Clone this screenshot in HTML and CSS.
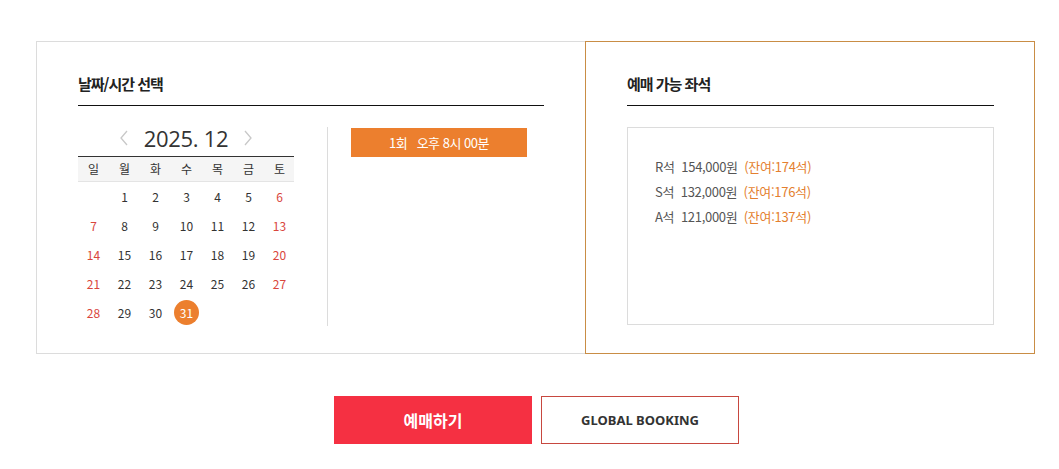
FILE: index.html
```html
<!DOCTYPE html>
<html lang="ko">
<head>
<meta charset="utf-8">
<link rel="stylesheet" href="styles.css">
</head>
<body>
<div class="wrap">
  <section class="panel left">
    <h2 class="title">날짜/시간 선택</h2>
    <div class="left-body">
      <div class="cal">
        <div class="month">
          <span class="arrow"><svg width="10" height="16" viewBox="0 0 10 16"><path d="M8 1 L2 8 L8 15" fill="none" stroke="#c8c8c8" stroke-width="1.3"/></svg></span>
          <span class="month-text">2025. 12</span>
          <span class="arrow"><svg width="10" height="16" viewBox="0 0 10 16"><path d="M2 1 L8 8 L2 15" fill="none" stroke="#c8c8c8" stroke-width="1.3"/></svg></span>
        </div>
        <div class="week">
          <span>일</span><span>월</span><span>화</span><span>수</span><span>목</span><span>금</span><span>토</span>
        </div>
        <div class="days">
          <span></span><span>1</span><span>2</span><span>3</span><span>4</span><span>5</span><span class="we">6</span>
          <span class="we">7</span><span>8</span><span>9</span><span>10</span><span>11</span><span>12</span><span class="we">13</span>
          <span class="we">14</span><span>15</span><span>16</span><span>17</span><span>18</span><span>19</span><span class="we">20</span>
          <span class="we">21</span><span>22</span><span>23</span><span>24</span><span>25</span><span>26</span><span class="we">27</span>
          <span class="we">28</span><span>29</span><span>30</span><span><b class="sel">31</b></span><span></span><span></span><span></span>
        </div>
      </div>
      <div class="times">
        <div class="time-btn">1회&nbsp;&nbsp; 오후 8시 00분</div>
      </div>
    </div>
  </section>
  <section class="panel right">
    <h2 class="title">예매 가능 좌석</h2>
    <div class="seats">
      <p>R석&nbsp; 154,000원 <em>(잔여:174석)</em></p>
      <p>S석&nbsp; 132,000원 <em>(잔여:176석)</em></p>
      <p>A석&nbsp; 121,000원 <em>(잔여:137석)</em></p>
    </div>
  </section>
</div>
<div class="actions">
  <a class="btn btn-book">예매하기</a>
  <a class="btn btn-global">GLOBAL BOOKING</a>
</div>
</body>
</html>
```
FILE: styles.css
```css
* { box-sizing: border-box; }
body {
  margin: 0;
  font-family: "Noto Sans CJK KR", "Noto Sans", sans-serif;
  color: #333;
  background: #fff;
}
.wrap {
  display: flex;
  margin: 41px 0 0 36px;
  width: 999px;
  height: 313px;
}
.panel {
  height: 313px;
  padding: 31px 0 0 41px;
}
.left {
  width: 549px;
  border: 1px solid #dcdcdc;
  border-right: none;
}
.right {
  width: 450px;
  border: 1px solid #c98d45;
}
.title {
  margin: 0;
  font-size: 15px;
  font-weight: 700;
  line-height: 22px;
  letter-spacing: -1px;
  color: #222;
  padding-bottom: 10px;
  border-bottom: 1px solid #111;
}
.left .title { width: 466px; }
.right .title { width: 367px; }

.left-body {
  display: flex;
  margin-top: 21px;
}
.cal { width: 249px; }
.month {
  display: flex;
  align-items: center;
  width: 216px;
  justify-content: center;
  height: 22px;
  margin-bottom: 7px;
  gap: 15px;
}
.arrow { display: flex; }
.month-text {
  font-family: "Open Sans", "Noto Sans", sans-serif;
  font-size: 22px;
  font-weight: 400;
  line-height: 22px;
  color: #333;
  letter-spacing: -0.3px;
}
.week {
  display: grid;
  grid-template-columns: repeat(7, 31px);
  width: 216px;
  height: 26px;
  border-top: 1px solid #333;
  border-bottom: 1px solid #e4e4e4;
  background: #f5f5f5;
  font-size: 12px;
  line-height: 24px;
  text-align: center;
  color: #333;
}
.days {
  display: grid;
  grid-template-columns: repeat(7, 31px);
  grid-auto-rows: 29px;
  width: 216px;
  font-size: 12px;
  text-align: center;
  color: #333;
}
.days span {
  display: flex;
  align-items: center;
  justify-content: center;
  padding-bottom: 1px;
}
.days .we { color: #d9463d; }
.sel {
  display: flex;
  align-items: center;
  justify-content: center;
  width: 25px;
  height: 25px;
  border-radius: 50%;
  background: #ec7f2e;
  color: #fff;
  font-weight: 400;
}
.times {
  border-left: 1px solid #dcdcdc;
  height: 199px;
  padding: 1px 0 0 23px;
}
.time-btn {
  width: 176px;
  height: 29px;
  background: #ec7f2e;
  color: #fff;
  font-size: 13px;
  line-height: 29px;
  text-align: center;
  letter-spacing: -0.5px;
}
.seats {
  margin-top: 21px;
  width: 367px;
  height: 198px;
  border: 1px solid #dcdcdc;
  padding: 26px 0 0 27px;
}
.seats p {
  margin: 0;
  font-size: 13px;
  line-height: 25px;
  color: #555;
  letter-spacing: -0.3px;
}
.seats em {
  font-style: normal;
  color: #e47f2f;
  margin-left: 3px;
}
.actions {
  display: flex;
  justify-content: center;
  gap: 9px;
  width: 999px;
  margin: 42px 0 0 37px;
}
.btn {
  display: flex;
  align-items: center;
  justify-content: center;
  width: 198px;
  height: 48px;
  text-decoration: none;
  font-weight: 700;
}
.btn-book {
  background: #f53042;
  color: #fff;
  font-size: 16px;
}
.btn-global {
  border: 1px solid #c7483f;
  color: #333;
  font-size: 13px;
  font-family: "Noto Sans", sans-serif;
}
```
